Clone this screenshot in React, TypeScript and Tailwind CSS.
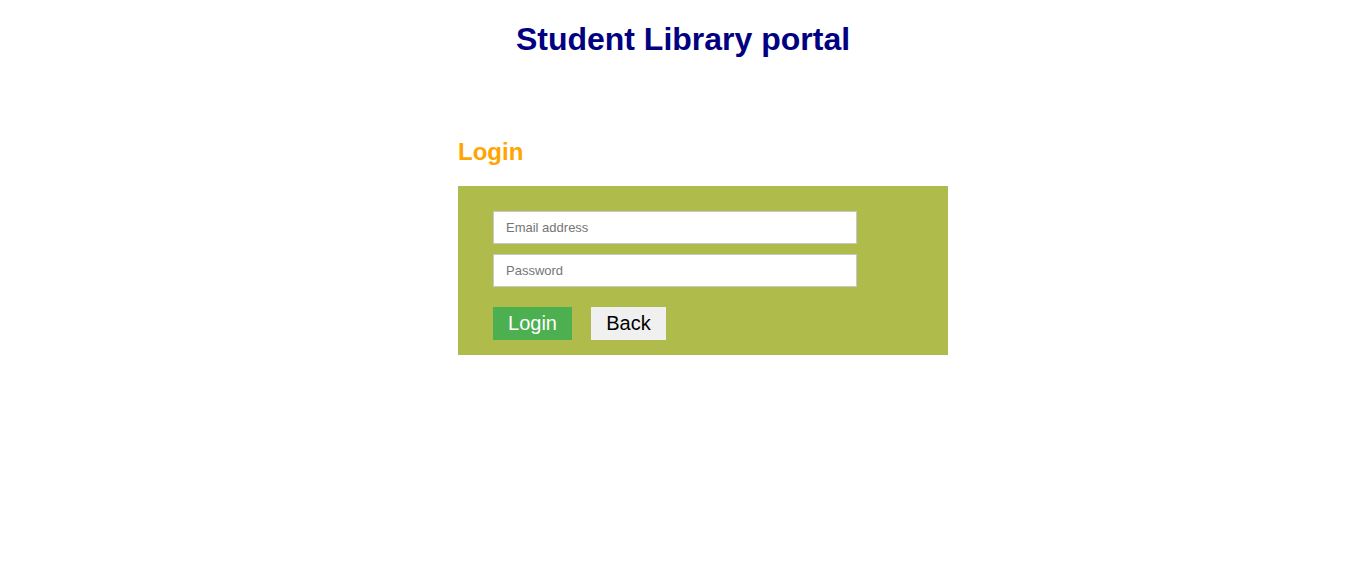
export default function App() {
  return (
    <div className="min-h-screen bg-white font-['Liberation_Sans',Arial,sans-serif]">
      <h1 className="pt-[21px] text-center text-[32px] font-bold leading-[37px] text-[#000080]">
        Student Library portal
      </h1>

      <div className="ml-[458px] mt-[80px] w-[490px]">
        <h2 className="text-[24px] font-bold leading-[28px] text-[#ffa500]">
          Login
        </h2>

        <form className="mt-[20px] bg-[#afbb4a] px-[35px] pt-[25px] pb-[15px]">
          <div className="flex flex-col gap-[10px]">
            <input
              type="email"
              placeholder="Email address"
              className="h-[33px] w-[364px] border border-[#c8c8c8] bg-white px-[12px] text-[13px] text-black placeholder:text-[#757575] outline-none"
            />
            <input
              type="password"
              placeholder="Password"
              className="h-[33px] w-[364px] border border-[#c8c8c8] bg-white px-[12px] text-[13px] text-black placeholder:text-[#757575] outline-none"
            />
          </div>
          <div className="mt-[20px] flex gap-[19px]">
            <button
              type="button"
              className="h-[33px] w-[79px] bg-[#4caf50] text-[20px] leading-[23px] text-white"
            >
              Login
            </button>
            <button
              type="button"
              className="h-[33px] w-[75px] bg-[#f0f0f0] text-[20px] leading-[23px] text-black"
            >
              Back
            </button>
          </div>
        </form>
      </div>
    </div>
  );
}
